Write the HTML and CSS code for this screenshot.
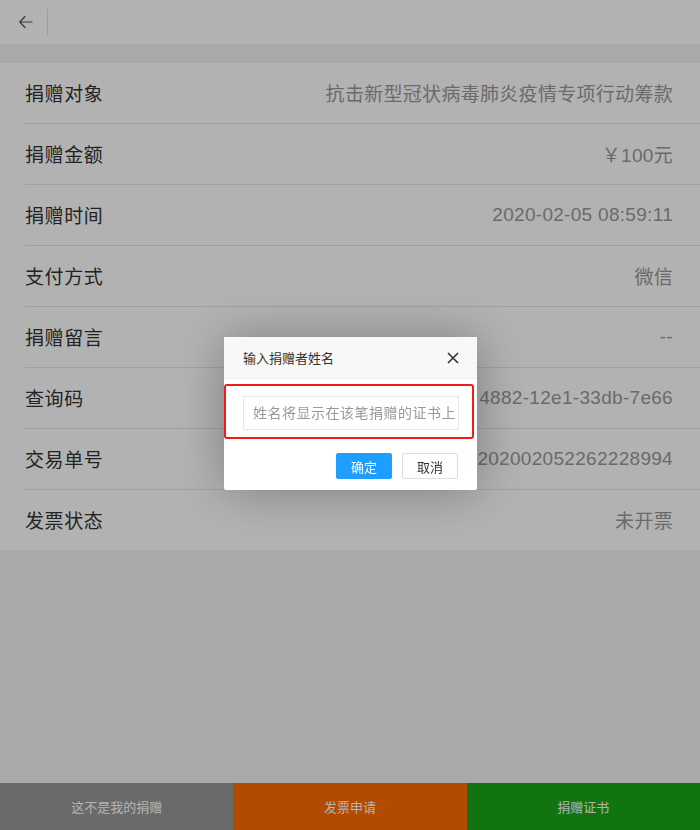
FILE: index.html
```html
<!DOCTYPE html>
<html lang="zh-CN">
<head>
<meta charset="utf-8">
<title>捐赠详情</title>
<link rel="stylesheet" href="styles.css">
</head>
<body>
<div class="page">
  <header class="topbar">
    <span class="back">
      <svg width="16" height="14" viewBox="0 0 16 14"><path d="M7 1.5L1.8 7 7 12.5M1.8 7H14" fill="none" stroke="#555" stroke-width="1.2" stroke-linecap="round" stroke-linejoin="round"/></svg>
    </span>
    <span class="divider"></span>
  </header>
  <ul class="list">
    <li class="row"><span class="label">捐赠对象</span><span class="value">抗击新型冠状病毒肺炎疫情专项行动筹款</span></li>
    <li class="row"><span class="label">捐赠金额</span><span class="value">￥100元</span></li>
    <li class="row"><span class="label">捐赠时间</span><span class="value">2020-02-05 08:59:11</span></li>
    <li class="row"><span class="label">支付方式</span><span class="value">微信</span></li>
    <li class="row"><span class="label">捐赠留言</span><span class="value">--</span></li>
    <li class="row"><span class="label">查询码</span><span class="value">4882-12e1-33db-7e66</span></li>
    <li class="row"><span class="label">交易单号</span><span class="value">4200000520202002052262228994</span></li>
    <li class="row last"><span class="label">发票状态</span><span class="value">未开票</span></li>
  </ul>
  <nav class="actions">
    <a class="act act-gray">这不是我的捐赠</a>
    <a class="act act-orange">发票申请</a>
    <a class="act act-green">捐赠证书</a>
  </nav>
</div>
<div class="shade"></div>
<div class="dialog">
  <div class="dlg-title">
    <span>输入捐赠者姓名</span>
    <svg class="close" width="12" height="12" viewBox="0 0 12 12"><path d="M1 1L11 11M11 1L1 11" stroke="#333" stroke-width="1.6"/></svg>
  </div>
  <div class="dlg-body">
    <div class="mark">
      <input class="name-input" type="text" placeholder="姓名将显示在该笔捐赠的证书上">
    </div>
  </div>
  <div class="dlg-btns">
    <a class="btn btn-ok">确定</a>
    <a class="btn btn-cancel">取消</a>
  </div>
</div>
</body>
</html>
```
FILE: styles.css
```css
* { box-sizing: border-box; }
html, body { margin: 0; padding: 0; }
body {
  width: 700px;
  height: 830px;
  overflow: hidden;
  background: #f2f2f2;
  font-family: "Liberation Sans", "Noto Sans CJK SC", sans-serif;
  color: #333;
}
.page { height: 830px; display: flex; flex-direction: column; }
.topbar {
  height: 44px;
  background: #fff;
  display: flex;
  align-items: center;
  padding-left: 18px;
  flex: none;
}
.back { width: 16px; height: 14px; display: flex; }
.divider {
  width: 1px;
  height: 26px;
  background: #e0e0e0;
  margin-left: 13px;
}
.list {
  list-style: none;
  margin: 19px 0 0 0;
  padding: 0 0 0 25px;
  background: #fff;
  flex: none;
}
.row {
  height: 61px;
  display: flex;
  align-items: center;
  justify-content: space-between;
  border-bottom: 1px solid #e6e6e6;
  padding-right: 27px;
  padding-bottom: 1px;
}
.row.last { border-bottom: none; height: 60px; }
.label { font-size: 19px; color: #333; letter-spacing: 0.6px; }
.value { font-size: 19px; color: #999; letter-spacing: 0.3px; }
.actions {
  margin-top: auto;
  height: 47px;
  display: grid;
  grid-template-columns: 1fr 1fr 1fr;
  flex: none;
}
.act {
  display: flex;
  align-items: center;
  justify-content: center;
  color: #fff;
  font-size: 13px;
}
.act-gray { background: #999; }
.act-orange { background: #ff6a00; }
.act-green { background: #17a717; }
.shade {
  position: fixed;
  inset: 0;
  background: rgba(0, 0, 0, 0.3);
}
.dialog {
  position: fixed;
  left: 224px;
  top: 337px;
  width: 253px;
  background: #fff;
  box-shadow: 1px 1px 50px rgba(0, 0, 0, 0.3);
  border-radius: 2px;
}
.dlg-title {
  height: 42px;
  background: #f8f8f8;
  border-bottom: 1px solid #eee;
  display: flex;
  align-items: center;
  justify-content: space-between;
  padding: 0 18px 0 19px;
  font-size: 13px;
  color: #333;
}
.close { display: block; }
.dlg-body { padding: 5px 3px 0 0; }
.mark {
  border: 2px solid #f21b1b;
  border-radius: 3px;
  height: 55px;
  padding: 10px 14px 0 17px;
}
.name-input {
  width: 216px;
  height: 34px;
  border: 1px solid #e6e6e6;
  outline: none;
  padding: 0 0 0 9px;
  font-family: "Liberation Sans", "Noto Sans CJK SC", sans-serif;
  font-size: 14px;
  letter-spacing: 0.5px;
  color: #333;
  background: #fff;
}
.name-input::placeholder { color: #999; }
.dlg-btns {
  display: flex;
  justify-content: flex-end;
  gap: 10px;
  padding: 14px 19px 11px 0;
}
.btn {
  width: 56px;
  height: 26px;
  display: flex;
  align-items: center;
  justify-content: center;
  font-size: 13px;
  border-radius: 2px;
}
.btn-ok { background: #1e9fff; color: #fff; border: 1px solid #1e9fff; }
.btn-cancel { background: #fff; color: #333; border: 1px solid #dedede; }
```
